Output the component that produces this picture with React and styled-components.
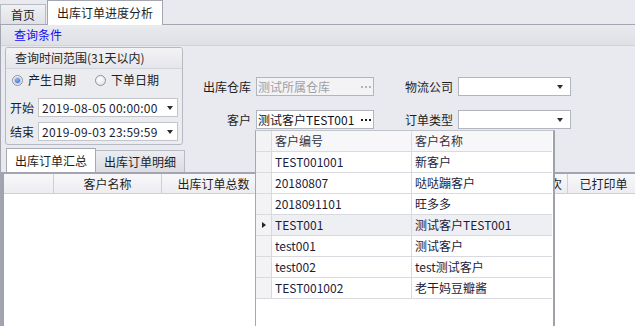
import styled, { createGlobalStyle } from "styled-components";

const GlobalStyle = createGlobalStyle`
    html, body {
        margin: 0;
        padding: 0;
        background: #e9eaef;
    }
    body {
        font-family: "Noto Sans CJK SC", "Microsoft YaHei", sans-serif;
        font-size: 12px;
        color: #1e1e1e;
    }
`

const customers = [
    { code: "TEST001001", name: "新客户" },
    { code: "20180807", name: "哒哒蹦客户" },
    { code: "2018091101", name: "旺多多" },
    { code: "TEST001", name: "测试客户TEST001", selected: true },
    { code: "test001", name: "测试客户" },
    { code: "test002", name: "test测试客户" },
    { code: "TEST001002", name: "老干妈豆瓣酱" },
]

export default function App() {
    return (
        <Screen>
            <GlobalStyle />
            <TopTabs>
                <TopTab>首页</TopTab>
                <TopTab $active>出库订单进度分析</TopTab>
            </TopTabs>
            <Page>
                <QueryBar>查询条件</QueryBar>
                <Criteria>
                    <GroupBox>
                        <GroupTitle>查询时间范围(31天以内)</GroupTitle>
                        <GroupBody>
                            <RadioRow>
                                <RadioOption>
                                    <Radio $checked />
                                    产生日期
                                </RadioOption>
                                <RadioOption $gap>
                                    <Radio />
                                    下单日期
                                </RadioOption>
                            </RadioRow>
                            <DateRow $first>
                                <DateLabel>开始</DateLabel>
                                <DateBox>
                                    2019-08-05 00:00:00
                                    <Arrow $right={4} />
                                </DateBox>
                            </DateRow>
                            <DateRow>
                                <DateLabel>结束</DateLabel>
                                <DateBox>
                                    2019-09-03 23:59:59
                                    <Arrow $right={4} />
                                </DateBox>
                            </DateRow>
                        </GroupBody>
                    </GroupBox>
                    <Fields>
                        <FieldLabel>出库仓库</FieldLabel>
                        <Input $disabled>
                            测试所属仓库
                            <Dots $disabled />
                        </Input>
                        <FieldLabel>物流公司</FieldLabel>
                        <Input>
                            <Arrow $right={5} />
                        </Input>
                        <FieldLabel>客户</FieldLabel>
                        <Input>
                            测试客户TEST001
                            <Dots />
                        </Input>
                        <FieldLabel>订单类型</FieldLabel>
                        <Input>
                            <Arrow $right={5} />
                        </Input>
                    </Fields>
                </Criteria>
                <ResultTabs>
                    <SubTab $active>出库订单汇总</SubTab>
                    <SubTab>出库订单明细</SubTab>
                </ResultTabs>
                <Grid>
                    <GridHeader>
                        <HeaderCell $w={50} />
                        <HeaderCell $w={108}>客户名称</HeaderCell>
                        <HeaderCell $w={104}>出库订单总数</HeaderCell>
                        <HeaderCell $w={200}>已出库订单数</HeaderCell>
                        <HeaderCell $w={102} $right>打印次</HeaderCell>
                        <HeaderCell $w={72}>已打印单</HeaderCell>
                    </GridHeader>
                </Grid>
            </Page>
            <Popup>
                <PopupRow $head>
                    <IndicatorCell $head />
                    <PopupCell $head $line>客户编号</PopupCell>
                    <PopupCell $head>客户名称</PopupCell>
                </PopupRow>
                {customers.map((c) => (
                    <PopupRow key={c.code} $selected={c.selected}>
                        <IndicatorCell>{c.selected && <RowMarker />}</IndicatorCell>
                        <PopupCell $line>{c.code}</PopupCell>
                        <PopupCell>{c.name}</PopupCell>
                    </PopupRow>
                ))}
            </Popup>
        </Screen>
    )
}

const Screen = styled.div`
    position: relative;
    width: 635px;
    height: 326px;
    overflow: hidden;
    display: flex;
    flex-direction: column;
    background: #e9eaef;
`
const TopTabs = styled.div`
    flex-shrink: 0;
    display: flex;
    align-items: flex-end;
    gap: 1px;
    height: 24px;
    border-bottom: 1px solid #a3a6b0;
`
const TopTab = styled.div`
    position: relative;
    box-sizing: border-box;
    height: ${(p) => (p.$active ? 25 : 20)}px;
    margin-bottom: ${(p) => (p.$active ? -1 : 0)}px;
    padding: 0 ${(p) => (p.$active ? 9 : 10)}px;
    line-height: ${(p) => (p.$active ? 23 : 19)}px;
    border: 1px solid ${(p) => (p.$active ? "#a3a6b0" : "#babcc5")};
    border-bottom: none;
    background: ${(p) => (p.$active ? "#ffffff" : "linear-gradient(#f0f1f4, #e0e1e6)")};
    color: #1e1e1e;
    white-space: nowrap;
`
const Page = styled.div`
    flex: 1;
    min-height: 0;
    display: flex;
    flex-direction: column;
    border-left: 1px solid #a3a6b0;
`
const QueryBar = styled.div`
    flex-shrink: 0;
    height: 20px;
    line-height: 20px;
    padding-left: 13px;
    border-bottom: 1px solid #d2d3d9;
    background: linear-gradient(#e9eaee, #dfe0e5);
    color: #0f0ff5;
`
const Criteria = styled.div`
    flex-shrink: 0;
    box-sizing: border-box;
    height: 102px;
    display: flex;
    align-items: flex-start;
    padding: 1px 0 0 4px;
`
const GroupBox = styled.div`
    box-sizing: border-box;
    width: 178px;
    height: 98px;
    display: flex;
    flex-direction: column;
    border: 1px solid #b6b8c2;
    border-radius: 3px;
    overflow: hidden;
    background: #ebecf0;
`
const GroupTitle = styled.div`
    height: 20px;
    line-height: 20px;
    padding-left: 9px;
    border-bottom: 1px solid #d3d4db;
    background: linear-gradient(#f3f3f6, #e5e6eb);
    color: #262626;
    white-space: nowrap;
`
const GroupBody = styled.div`
    display: flex;
    flex-direction: column;
    padding-left: 4px;
`
const RadioRow = styled.div`
    height: 22px;
    display: flex;
    align-items: center;
    padding-left: 2px;
`
const RadioOption = styled.label`
    display: flex;
    align-items: center;
    gap: 5px;
    margin-left: ${(p) => (p.$gap ? 19 : 0)}px;
    line-height: 16px;
    white-space: nowrap;
`
const Radio = styled.span`
    position: relative;
    box-sizing: border-box;
    width: 11px;
    height: 11px;
    border-radius: 50%;
    border: 1px solid #8f929c;
    background: radial-gradient(circle at 40% 35%, #ffffff, #dcdde3);

    &::after {
        content: "";
        display: ${(p) => (p.$checked ? "block" : "none")};
        position: absolute;
        left: 2px;
        top: 2px;
        width: 5px;
        height: 5px;
        border-radius: 50%;
        background: radial-gradient(circle at 40% 35%, #8fb3f0, #2f5fc4);
        box-shadow: 0 0 0 1px #b9cdf0;
    }
`
const DateRow = styled.div`
    display: flex;
    align-items: center;
    margin-top: ${(p) => (p.$first ? 7 : 5)}px;
`
const DateLabel = styled.span`
    width: 24px;
    margin-right: 4px;
    line-height: 19px;
    white-space: nowrap;
`
const DateBox = styled.div`
    box-sizing: border-box;
    width: 140px;
    height: 19px;
    display: flex;
    align-items: center;
    padding-left: 3px;
    border: 1px solid #c3c5cd;
    background: #ffffff;
    color: #1c1c30;
    line-height: 17px;
    letter-spacing: 0.25px;
    white-space: nowrap;
`
const Arrow = styled.span`
    margin-left: auto;
    margin-right: ${(p) => p.$right}px;
    width: 0;
    height: 0;
    border-left: 3px solid transparent;
    border-right: 3px solid transparent;
    border-top: 4px solid #2c2c34;
`
const Fields = styled.div`
    display: grid;
    grid-template-columns: 58px 118px 78px 113px;
    grid-auto-rows: 19px;
    column-gap: 3px;
    row-gap: 14px;
    margin-left: 12px;
    padding-top: 30px;
`
const FieldLabel = styled.span`
    text-align: right;
    padding-right: 2px;
    line-height: 19px;
    white-space: nowrap;
`
const Input = styled.div`
    box-sizing: border-box;
    height: 19px;
    display: flex;
    align-items: center;
    padding: 0 2px 0 1px;
    border: 1px solid #b3b5be;
    background: ${(p) => (p.$disabled ? "#f3f3f6" : "#ffffff")};
    color: ${(p) => (p.$disabled ? "#9e9ea4" : "#101018")};
    line-height: 17px;
    white-space: nowrap;
    overflow: hidden;
`
const Dots = styled.span`
    flex-shrink: 0;
    margin-left: auto;
    margin-right: 8px;
    width: 2px;
    height: 2px;
    background: ${(p) => (p.$disabled ? "#b4b5bc" : "#1a1a22")};
    box-shadow: 4px 0 0 ${(p) => (p.$disabled ? "#b4b5bc" : "#1a1a22")},
        8px 0 0 ${(p) => (p.$disabled ? "#b4b5bc" : "#1a1a22")};
`
const ResultTabs = styled.div`
    flex-shrink: 0;
    height: 24px;
    display: flex;
    align-items: flex-end;
    padding-left: 5px;
`
const SubTab = styled.div`
    box-sizing: border-box;
    width: ${(p) => (p.$active ? 90 : 89)}px;
    height: ${(p) => (p.$active ? 24 : 22)}px;
    line-height: ${(p) => (p.$active ? 23 : 21)}px;
    text-align: center;
    border: 1px solid ${(p) => (p.$active ? "#a7a9b3" : "#b9bbc4")};
    border-bottom: none;
    border-left-width: ${(p) => (p.$active ? 1 : 0)}px;
    background: ${(p) => (p.$active ? "#ffffff" : "linear-gradient(#ecedf0, #dcdde2)")};
    color: #1e1e1e;
    white-space: nowrap;
`
const Grid = styled.div`
    flex: 1;
    min-height: 0;
    display: flex;
    flex-direction: column;
    border-top: 2px solid #a3a5b0;
    border-left: 3px solid #a0a2ad;
    background: #ffffff;
`
const GridHeader = styled.div`
    display: flex;
    height: 19px;
    border-bottom: 1px solid #cfd0d7;
    background: linear-gradient(#f8f8fa, #ededf1);
`
const HeaderCell = styled.div`
    flex: none;
    box-sizing: border-box;
    width: ${(p) => p.$w}px;
    padding-right: ${(p) => (p.$right ? 5 : 0)}px;
    border-right: 1px solid #cfd0d7;
    text-align: ${(p) => (p.$right ? "right" : "center")};
    line-height: 19px;
    color: #1e1e1e;
    white-space: nowrap;
    overflow: hidden;
`
const Popup = styled.div`
    position: absolute;
    left: 255px;
    top: 130px;
    box-sizing: border-box;
    width: 300px;
    height: 200px;
    padding-right: 1px;
    border-left: 1px solid #a5a7b1;
    border-top: 1px solid #c2c4cc;
    border-right: 2px solid #9fa1ab;
    background: #ffffff;
`
const PopupRow = styled.div`
    display: grid;
    grid-template-columns: 16px 140px 140px;
    height: 21px;
    box-sizing: border-box;
    border-bottom: 1px solid #d9dae0;
    background: ${(p) => (p.$selected ? "#eeeff3" : p.$head ? "#f7f7f9" : "#ffffff")};
`
const PopupCell = styled.div`
    box-sizing: border-box;
    padding-left: 3px;
    border-right: ${(p) => (p.$line ? "1px solid #d9dae0" : "none")};
    line-height: 20px;
    color: ${(p) => (p.$head ? "#333338" : "#1b1b3a")};
    white-space: nowrap;
    overflow: hidden;
`
const IndicatorCell = styled.div`
    display: flex;
    align-items: center;
    justify-content: center;
    border-right: 1px solid #d9dae0;
    background: #f3f3f6;
`
const RowMarker = styled.span`
    width: 0;
    height: 0;
    border-top: 3px solid transparent;
    border-bottom: 3px solid transparent;
    border-left: 4px solid #222228;
`
